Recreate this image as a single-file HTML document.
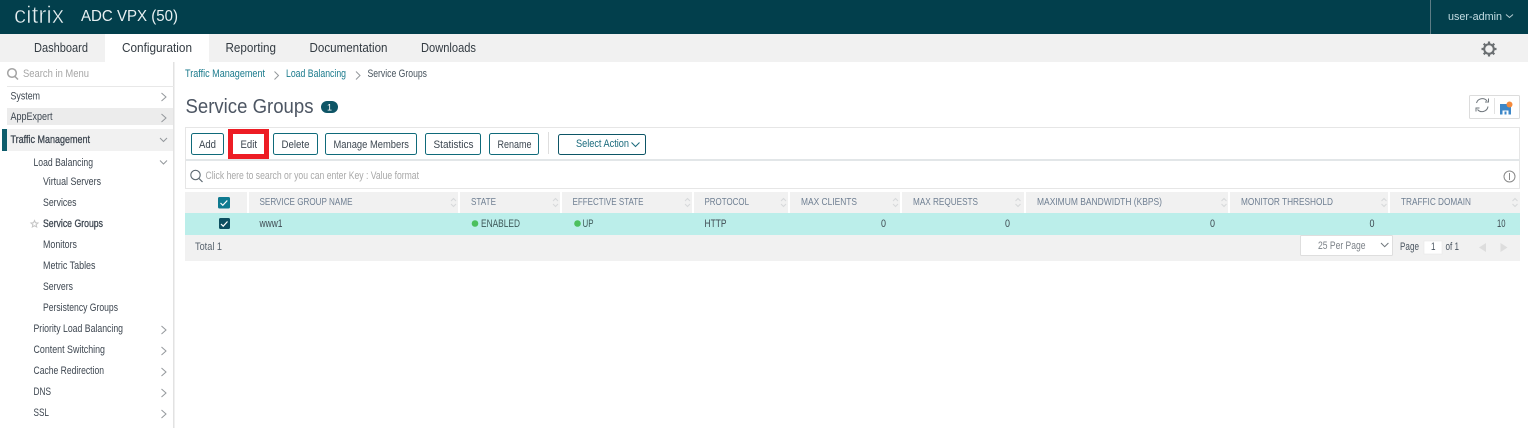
<!DOCTYPE html>
<html><head><meta charset="utf-8"><title>Service Groups</title>
<style>
html,body{margin:0;padding:0;background:#fff;width:1528px;height:428px;overflow:hidden}
svg{display:block}
text{font-family:"Liberation Sans",sans-serif;font-size:11px;fill:#3c4650}
.nav{font-size:13px;fill:#333b42}
.side{fill:#3d4650}
.semi{stroke:#3d4650;stroke-width:.3px}
.hd{fill:#6f7f92;font-size:10.500px}
.btn{fill:#3c4650}
.cell{fill:#3f4a52}
.chev{fill:none;stroke:#94989c;stroke-width:1}
.sort{fill:none;stroke:#d6d8da;stroke-width:1}
.b{fill:#fff;stroke:#0f6a7a;stroke-width:1}
</style></head><body>
<svg width="1528" height="428" viewBox="0 0 1528 428" xmlns="http://www.w3.org/2000/svg">
<rect width="1528" height="428" fill="#fff"/>
<!-- header -->
<rect width="1528" height="34" fill="#023f4c"/>
<text x="14" y="23" style="font-size:24px;fill:#e6eef0;stroke:#023f4c;stroke-width:.6px;paint-order:normal" textLength="50" lengthAdjust="spacingAndGlyphs">citrix</text>
<text x="81" y="21" style="font-size:15.500px;fill:#e8f0f2" textLength="97" lengthAdjust="spacingAndGlyphs">ADC VPX (50)</text>
<rect x="1430" y="0" width="1" height="34" fill="#5d7c85"/>
<text x="1448" y="20" style="fill:#c4dde4" textLength="54" lengthAdjust="spacingAndGlyphs">user-admin</text>
<path d="M1506 14.500l3.500 3 3.500-3" fill="none" stroke="#b8ccd2"/>
<!-- nav -->
<rect y="34" width="1528" height="28" fill="#f1f1f1"/>
<rect x="105" y="34" width="104" height="28" fill="#fff"/>
<text class="nav" x="34" y="52" textLength="54" lengthAdjust="spacingAndGlyphs">Dashboard</text>
<text class="nav" x="122" y="52" textLength="70" lengthAdjust="spacingAndGlyphs">Configuration</text>
<text class="nav" x="225.500" y="52" textLength="50.500" lengthAdjust="spacingAndGlyphs">Reporting</text>
<text class="nav" x="309.500" y="52" textLength="78" lengthAdjust="spacingAndGlyphs">Documentation</text>
<text class="nav" x="421" y="52" textLength="55" lengthAdjust="spacingAndGlyphs">Downloads</text>
<g fill="none" stroke="#6b6f72">
<circle cx="1489" cy="49" r="4.800" stroke-width="2"/>
<path d="M1489 44v-2.500M1489 56.500V54M1484 49h-2.500M1496.500 49H1494M1485.500 45.500l-1.800-1.800M1494.300 54.300l-1.800-1.800M1485.500 52.500l-1.800 1.800M1494.300 43.700l-1.800 1.800" stroke-width="2.200"/>
</g>
<!-- sidebar -->
<rect x="173" y="62" width="1.500" height="366" fill="#e2e2e2"/>
<rect x="7" y="86" width="167" height="1" fill="#e8e8e8"/>
<circle cx="12" cy="73" r="4.300" fill="none" stroke="#a3a3a3" stroke-width="1.500"/>
<path d="M15 76.500l3 3" stroke="#a3a3a3" stroke-width="1.500"/>
<text x="23" y="77" style="fill:#a6a6a6" textLength="66" lengthAdjust="spacingAndGlyphs">Search in Menu</text>
<rect x="7" y="108" width="166" height="17" fill="#ececec"/>
<rect x="7" y="129" width="166" height="22" fill="#f1f1f1"/>
<rect x="2" y="129" width="5" height="22" fill="#0d5c6b"/>
<text class="side" x="10.500" y="99.500" textLength="29.500" lengthAdjust="spacingAndGlyphs">System</text>
<text class="side" x="10.500" y="120" textLength="42" lengthAdjust="spacingAndGlyphs">AppExpert</text>
<text class="side semi" x="10.500" y="143" textLength="79.500" lengthAdjust="spacingAndGlyphs">Traffic Management</text>
<text class="side" x="33.500" y="166" textLength="59.500" lengthAdjust="spacingAndGlyphs">Load Balancing</text>
<text class="side" x="43" y="185" textLength="58" lengthAdjust="spacingAndGlyphs">Virtual Servers</text>
<text class="side" x="43" y="206" textLength="33.500" lengthAdjust="spacingAndGlyphs">Services</text>
<text class="side semi" x="43" y="227" textLength="60" lengthAdjust="spacingAndGlyphs">Service Groups</text>
<text class="side" x="43" y="248" textLength="34" lengthAdjust="spacingAndGlyphs">Monitors</text>
<text class="side" x="43" y="269" textLength="52.500" lengthAdjust="spacingAndGlyphs">Metric Tables</text>
<text class="side" x="43" y="290" textLength="30" lengthAdjust="spacingAndGlyphs">Servers</text>
<text class="side" x="43" y="311" textLength="75" lengthAdjust="spacingAndGlyphs">Persistency Groups</text>
<text class="side" x="33.500" y="332" textLength="89.500" lengthAdjust="spacingAndGlyphs">Priority Load Balancing</text>
<text class="side" x="33.500" y="353" textLength="71.500" lengthAdjust="spacingAndGlyphs">Content Switching</text>
<text class="side" x="33.500" y="374" textLength="70.500" lengthAdjust="spacingAndGlyphs">Cache Redirection</text>
<text class="side" x="33.500" y="395" textLength="17.500" lengthAdjust="spacingAndGlyphs">DNS</text>
<text class="side" x="33.500" y="416" textLength="15.500" lengthAdjust="spacingAndGlyphs">SSL</text>
<path d="M34.500 220.500l1 2.300 2.500.2-1.900 1.600.6 2.400-2.200-1.300-2.200 1.300.6-2.400-1.900-1.600 2.500-.2z" fill="none" stroke="#c4c4c4"/>
<g class="chev">
<path d="M161.500 93l4.500 4-4.500 4M161.500 114l4.500 4-4.500 4M161.500 326l4.500 4-4.500 4M161.500 347l4.500 4-4.500 4M161.500 368l4.500 4-4.500 4M161.500 389l4.500 4-4.500 4M161.500 410l4.500 4-4.500 4"/>
<path d="M160 138l3.500 3.500 3.500-3.500M160 160.500l3.500 3.500 3.500-3.500"/>
</g>
<!-- breadcrumb -->
<text x="185" y="77" style="fill:#1a7a8c" textLength="80" lengthAdjust="spacingAndGlyphs">Traffic Management</text>
<text x="286" y="77" style="fill:#1a7a8c" textLength="60" lengthAdjust="spacingAndGlyphs">Load Balancing</text>
<text x="367.500" y="77" style="fill:#48545e" textLength="59.500" lengthAdjust="spacingAndGlyphs">Service Groups</text>
<path class="chev" d="M274.500 71.500l4 4-4 4M356 71.500l4 4-4 4"/>
<!-- title -->
<text x="185.500" y="113" style="font-size:20px;fill:#4d5663" textLength="128" lengthAdjust="spacingAndGlyphs">Service Groups</text>
<rect x="321" y="101" width="17" height="12" rx="6" fill="#0e5566"/>
<text x="327" y="110.500" style="font-size:9px;fill:#fff" textLength="5" lengthAdjust="spacingAndGlyphs">1</text>
<!-- top right -->
<rect x="1469.500" y="95.500" width="50" height="23" rx="1" fill="#fff" stroke="#dcdcdc"/>
<rect x="1494" y="98" width="1" height="16" fill="#e2e2e2"/>
<path d="M1476.500 103a6 6 0 0 1 10.500-2M1488 106.500a6 6 0 0 1-10.500 3" fill="none" stroke="#6e757b"/>
<path d="M1488.500 98.500v3.500h-3.500M1476 111.500v-3.500h3.500" fill="none" stroke="#6e757b"/>
<path d="M1500 104h8l3 2.500v8h-11z" fill="#3d87c8"/>
<rect x="1502.500" y="110.500" width="6" height="4" fill="#fff"/>
<rect x="1504.500" y="111.500" width="2" height="3" fill="#3d87c8"/>
<circle cx="1509.500" cy="104.500" r="3" fill="#f58a3c"/>
<!-- toolbar -->
<rect x="185.500" y="127.500" width="1334" height="32" fill="#fff" stroke="#e6e6e6"/>
<rect x="186" y="159" width="1334" height="2" fill="#e2e6e8"/>
<rect class="b" x="191.500" y="133.500" width="32" height="21" rx="2"/>
<rect x="230.500" y="131.500" width="36" height="25" fill="#fff" stroke="#ed1c24" stroke-width="5"/>
<rect class="b" x="273.500" y="133.500" width="44" height="21" rx="2"/>
<rect class="b" x="325.500" y="133.500" width="91" height="21" rx="2"/>
<rect class="b" x="425.500" y="133.500" width="55" height="21" rx="2"/>
<rect class="b" x="489.500" y="133.500" width="49" height="21" rx="2"/>
<rect x="548" y="132" width="1" height="22" fill="#dedede"/>
<rect x="558.500" y="134.500" width="87" height="20" rx="2" fill="#fff" stroke="#0d5566"/>
<text class="btn" x="199" y="148" textLength="17" lengthAdjust="spacingAndGlyphs">Add</text>
<text class="btn" x="240.500" y="148" textLength="16.500" lengthAdjust="spacingAndGlyphs">Edit</text>
<text class="btn" x="281.500" y="148" textLength="28" lengthAdjust="spacingAndGlyphs">Delete</text>
<text class="btn" x="333.500" y="148" textLength="75.500" lengthAdjust="spacingAndGlyphs">Manage Members</text>
<text class="btn" x="433.500" y="148" textLength="40" lengthAdjust="spacingAndGlyphs">Statistics</text>
<text class="btn" x="497.500" y="148" textLength="34" lengthAdjust="spacingAndGlyphs">Rename</text>
<text x="576" y="147" style="fill:#1a6a7c" textLength="53" lengthAdjust="spacingAndGlyphs">Select Action</text>
<path d="M631.500 142.500l4 4 4-4" fill="none" stroke="#1a6a7c"/>
<!-- search -->
<rect x="185.500" y="160.500" width="1334" height="28" fill="#fff" stroke="#e6e6e6"/>
<rect x="186" y="159" width="1334" height="2" fill="#e2e6e8"/>
<circle cx="195.500" cy="175" r="4.700" fill="none" stroke="#5e6a72" stroke-width="1.100"/>
<path d="M199 178.500l3.500 3.500" stroke="#5e6a72" stroke-width="1.200"/>
<text x="205.500" y="179" style="fill:#a8a8a8" textLength="213.500" lengthAdjust="spacingAndGlyphs">Click here to search or you can enter Key : Value format</text>
<circle cx="1509.500" cy="176.500" r="5.500" fill="none" stroke="#8a8a8a"/>
<rect x="1509" y="173" width="1" height="7" fill="#8a8a8a"/>
<!-- table head -->
<g fill="#f1f1f1">
<rect x="185" y="192" width="62" height="21"/>
<rect x="249" y="192" width="209" height="21"/>
<rect x="460" y="192" width="100" height="21"/>
<rect x="562" y="192" width="130" height="21"/>
<rect x="694" y="192" width="94" height="21"/>
<rect x="790" y="192" width="110" height="21"/>
<rect x="902" y="192" width="122" height="21"/>
<rect x="1026" y="192" width="202" height="21"/>
<rect x="1230" y="192" width="158" height="21"/>
<rect x="1390" y="192" width="130" height="21"/>
</g>
<rect x="218" y="197" width="12" height="11.500" rx="1.500" fill="#0f7a90"/>
<path d="M220.500 203l2.300 2.300 4.500-4.800" fill="none" stroke="#fff" stroke-width="1.200"/>
<text class="hd" x="259.500" y="205" textLength="93" lengthAdjust="spacingAndGlyphs">SERVICE GROUP NAME</text>
<text class="hd" x="471" y="205" textLength="25" lengthAdjust="spacingAndGlyphs">STATE</text>
<text class="hd" x="572.500" y="205" textLength="71" lengthAdjust="spacingAndGlyphs">EFFECTIVE STATE</text>
<text class="hd" x="704.500" y="205" textLength="44.500" lengthAdjust="spacingAndGlyphs">PROTOCOL</text>
<text class="hd" x="801" y="205" textLength="56" lengthAdjust="spacingAndGlyphs">MAX CLIENTS</text>
<text class="hd" x="913" y="205" textLength="65" lengthAdjust="spacingAndGlyphs">MAX REQUESTS</text>
<text class="hd" x="1037" y="205" textLength="125" lengthAdjust="spacingAndGlyphs">MAXIMUM BANDWIDTH (KBPS)</text>
<text class="hd" x="1241" y="205" textLength="92" lengthAdjust="spacingAndGlyphs">MONITOR THRESHOLD</text>
<text class="hd" x="1401" y="205" textLength="70" lengthAdjust="spacingAndGlyphs">TRAFFIC DOMAIN</text>
<path class="sort" d="M451 201l2.500-2.500 2.500 2.500M451 204l2.500 2.500 2.500-2.500M553 201l2.500-2.500 2.500 2.500M553 204l2.500 2.500 2.500-2.500M685 201l2.500-2.500 2.500 2.500M685 204l2.500 2.500 2.500-2.500M781 201l2.500-2.500 2.500 2.500M781 204l2.500 2.500 2.500-2.500M893 201l2.500-2.500 2.500 2.500M893 204l2.500 2.500 2.500-2.500M1015.500 201l2.500-2.500 2.500 2.500M1015.500 204l2.500 2.500 2.500-2.500M1221.500 201l2.500-2.500 2.500 2.500M1221.500 204l2.500 2.500 2.500-2.500M1381.500 201l2.500-2.500 2.500 2.500M1381.500 204l2.500 2.500 2.500-2.500M1512.500 201l2.500-2.500 2.500 2.500M1512.500 204l2.500 2.500 2.500-2.500"/>
<!-- row -->
<rect x="185" y="213" width="1335" height="22" fill="#bbeeea"/>
<rect x="219" y="218" width="11" height="11" rx="1.500" fill="#0d4f60"/>
<path d="M221 224l2.200 2.200 4.300-4.700" fill="none" stroke="#fff" stroke-width="1.200"/>
<text class="cell" x="259.500" y="227" textLength="23" lengthAdjust="spacingAndGlyphs">www1</text>
<circle cx="475" cy="223.500" r="3.300" fill="#4cc05e"/>
<text x="481" y="227" style="fill:#3f5a5a" textLength="39" lengthAdjust="spacingAndGlyphs">ENABLED</text>
<circle cx="577.500" cy="223.500" r="3.300" fill="#4cc05e"/>
<text x="582.500" y="227" style="fill:#3f5a5a" textLength="11" lengthAdjust="spacingAndGlyphs">UP</text>
<text class="cell" x="704.500" y="227" textLength="22" lengthAdjust="spacingAndGlyphs">HTTP</text>
<text class="cell" x="881" y="227" textLength="5" lengthAdjust="spacingAndGlyphs">0</text>
<text class="cell" x="1005" y="227" textLength="5" lengthAdjust="spacingAndGlyphs">0</text>
<text class="cell" x="1210" y="227" textLength="5" lengthAdjust="spacingAndGlyphs">0</text>
<text class="cell" x="1369.500" y="227" textLength="5" lengthAdjust="spacingAndGlyphs">0</text>
<text class="cell" x="1497" y="227" textLength="8.500" lengthAdjust="spacingAndGlyphs">10</text>
<!-- footer -->
<rect x="185" y="235" width="1335" height="26" fill="#f1f1f1"/>
<text x="195" y="250" style="fill:#5a6570" textLength="27" lengthAdjust="spacingAndGlyphs">Total 1</text>
<rect x="1300.500" y="235.500" width="92" height="20" rx="1" fill="#fff" stroke="#dedede"/>
<text x="1318" y="249" style="fill:#7c8288" textLength="47.500" lengthAdjust="spacingAndGlyphs">25 Per Page</text>
<path d="M1381 243l3.700 3.700 3.700-3.700" fill="none" stroke="#6e757b"/>
<text x="1400" y="250" style="fill:#4a5560" textLength="19" lengthAdjust="spacingAndGlyphs">Page</text>
<rect x="1424" y="241" width="18" height="13" fill="#fff" stroke="#e4e4e4" stroke-width=".5"/>
<text x="1431" y="250" style="fill:#4a5560" textLength="4.500" lengthAdjust="spacingAndGlyphs">1</text>
<text x="1445.500" y="250" style="fill:#4a5560" textLength="13.500" lengthAdjust="spacingAndGlyphs">of 1</text>
<path d="M1486 243v9l-7-4.500zM1500.500 243v9l7-4.500z" fill="#dddddd"/>
</svg>
</body></html>
